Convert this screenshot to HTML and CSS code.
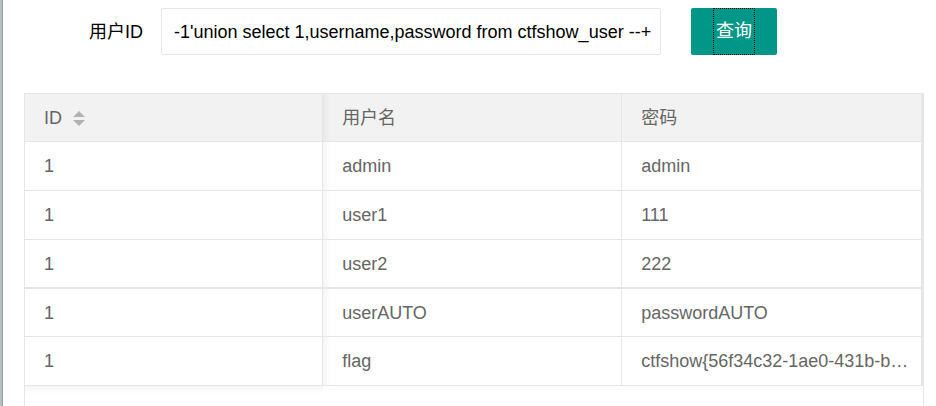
FILE: index.html
```html
<!DOCTYPE html>
<html lang="zh-CN">
<head>
<meta charset="utf-8">
<title>用户查询</title>
<link rel="stylesheet" href="styles.css">
</head>
<body>
<main class="page">
  <form class="search">
    <label class="search-label" for="uid">用户ID</label>
    <input class="search-input" id="uid" type="text" value="-1'union select 1,username,password from ctfshow_user --+">
    <button class="search-button" type="button"><span class="focus-frame">查询</span></button>
  </form>
  <div class="table-view">
    <table class="users">
      <colgroup><col class="col-id"><col class="col-name"><col></colgroup>
      <thead>
        <tr>
          <th>ID<svg class="sort" width="12" height="16" viewBox="0 0 12 16" aria-hidden="true"><path d="M0 7 6 1l6 6zM0 10h12l-6 6z" fill="#b2b2b2"/></svg></th>
          <th>用户名</th>
          <th>密码</th>
        </tr>
      </thead>
      <tbody>
        <tr><td>1</td><td>admin</td><td>admin</td></tr>
        <tr><td>1</td><td>user1</td><td>111</td></tr>
        <tr class="group-end"><td>1</td><td>user2</td><td>222</td></tr>
        <tr class="group-start"><td>1</td><td>userAUTO</td><td>passwordAUTO</td></tr>
        <tr><td>1</td><td>flag</td><td>ctfshow{56f34c32-1ae0-431b-b…</td></tr>
      </tbody>
    </table>
  </div>
</main>
</body>
</html>
```

FILE: styles.css
```css
* {
  box-sizing: border-box;
}

body {
  margin: 0;
  background: #fff;
  color: #000;
  font: 18px/24px "Liberation Sans", Arial, "Noto Sans CJK SC", sans-serif;
}

.page {
  display: flex;
  flex-direction: column;
  min-height: 100vh;
  padding: 8px 12px 0 21px;
  border-left: 2px solid #b9bfc4;
  box-shadow: inset 1px 0 #999b9e;
  padding-left: 22px;
}

.search {
  display: flex;
  align-items: center;
  margin-bottom: 38px;
}

.search-label {
  width: 119px;
  text-align: right;
}

.search-input {
  width: 500px;
  height: 47px;
  margin: 0 30px 0 18px;
  padding: 2px 4px 0 12px;
  border: 1px solid #e6e6e6;
  border-radius: 2px;
  background: #fff;
  color: #000;
  font: inherit;
}

.search-button {
  height: 47px;
  padding: 0 22px;
  border: 0;
  border-radius: 2px;
  background: #009688;
  color: #fff;
  font: inherit;
}

.focus-frame {
  display: block;
  padding: 0 2px;
  border: 1px dotted #000;
  line-height: 45px;
}

.table-view {
  flex: 1;
  overflow: hidden;
  border: solid #e6e6e6;
  border-width: 1px 1px 0;
}

.users {
  width: 100%;
  border-spacing: 0;
  table-layout: fixed;
  color: #666;
}

.col-id {
  width: 33.2%;
}

.col-name {
  width: 33.3%;
}

th,
td {
  height: 49px;
  padding: 0 8px 0 19px;
  border: solid #e6e6e6;
  border-width: 0 1px 1px 0;
  overflow: hidden;
  text-align: left;
  text-overflow: ellipsis;
  white-space: nowrap;
  font-weight: 400;
}

th {
  height: 48px;
  background: #f2f2f2;
}

th:last-child,
td:last-child {
  border-right-width: 2px;
}

.group-end td {
  border-bottom-width: 2px;
}

.group-start td {
  height: 48px;
}

/* shadow cast by the pinned first column */
th:nth-child(2),
td:nth-child(2) {
  background-image: linear-gradient(to right, rgba(0, 0, 0, 0.04), transparent 8px);
}

.table-view::after {
  content: "";
  display: block;
  width: 33.2%;
  height: 8px;
  background: linear-gradient(rgba(0, 0, 0, 0.04), transparent);
}

.sort {
  margin-left: 11px;
  vertical-align: -2px;
}
```
